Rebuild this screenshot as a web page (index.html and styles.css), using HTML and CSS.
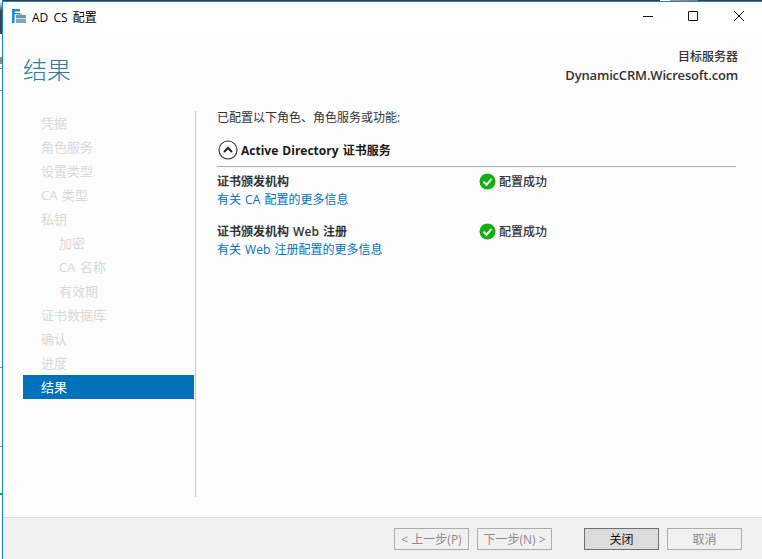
FILE: index.html
```html
<!DOCTYPE html>
<html lang="zh-CN">
<head>
<meta charset="utf-8">
<title>AD CS 配置</title>
<link rel="stylesheet" href="styles.css">
</head>
<body>
<div class="desk-strip"></div>
<div class="window">
  <div class="top-strip"></div>
  <header class="titlebar">
    <svg class="app-icon" width="14" height="14" viewBox="0 0 14 14">
      <path d="M0 0h8v2.4H2.6V4H8v1.2H2.6V14H0z" fill="#1e88dc"/>
      <path d="M6.5 6V4.6h3.6V6h-1V5.5H7.5V6z" fill="#7f9db2"/>
      <path d="M4 6h10v3H4z" fill="#6f95b0"/>
      <path d="M4 9.6h10V14H4z" fill="#82a5bd"/>
    </svg>
    <span class="title-text">AD CS 配置</span>
    <div class="controls">
      <svg class="ctl" width="46" height="32" viewBox="0 0 46 32"><path d="M19 16.5h10" stroke="#111" fill="none"/></svg>
      <svg class="ctl" width="46" height="32" viewBox="0 0 46 32"><path d="M18.5 11.5h9v9h-9z" stroke="#111" fill="none"/></svg>
      <svg class="ctl" width="46" height="32" viewBox="0 0 46 32"><path d="M18 11l10 10M28 11L18 21" stroke="#111" fill="none"/></svg>
    </div>
  </header>
  <main class="wizard">
    <div class="head">
      <h1 class="page-title">结果</h1>
      <div class="server">
        <div class="server-label">目标服务器</div>
        <div class="server-name">DynamicCRM.Wicresoft.com</div>
      </div>
    </div>
    <div class="body">
      <nav class="steps">
        <div class="step">凭据</div>
        <div class="step">角色服务</div>
        <div class="step">设置类型</div>
        <div class="step">CA 类型</div>
        <div class="step">私钥</div>
        <div class="step sub">加密</div>
        <div class="step sub">CA 名称</div>
        <div class="step sub">有效期</div>
        <div class="step">证书数据库</div>
        <div class="step">确认</div>
        <div class="step">进度</div>
        <div class="step current">结果</div>
      </nav>
      <section class="content">
        <p class="intro">已配置以下角色、角色服务或功能:</p>
        <div class="group-head">
          <svg width="20" height="20" viewBox="0 0 20 20"><circle cx="10" cy="10" r="9" fill="#fff" stroke="#333" stroke-width="1.1"/><path d="M6 12l4-4 4 4" fill="none" stroke="#222" stroke-width="2"/></svg>
          <span class="group-name">Active Directory 证书服务</span>
        </div>
        <div class="result">
          <div class="result-main">
            <div class="result-name">证书颁发机构</div>
            <a class="result-link">有关 CA 配置的更多信息</a>
          </div>
          <div class="status">
            <svg width="17" height="17" viewBox="0 0 17 17"><circle cx="8.5" cy="8.5" r="8" fill="#10b010"/><path d="M4.5 8.8l3 3 5-6" fill="none" stroke="#fff" stroke-width="2"/></svg>
            <span>配置成功</span>
          </div>
        </div>
        <div class="result">
          <div class="result-main">
            <div class="result-name">证书颁发机构 Web 注册</div>
            <a class="result-link">有关 Web 注册配置的更多信息</a>
          </div>
          <div class="status">
            <svg width="17" height="17" viewBox="0 0 17 17"><circle cx="8.5" cy="8.5" r="8" fill="#10b010"/><path d="M4.5 8.8l3 3 5-6" fill="none" stroke="#fff" stroke-width="2"/></svg>
            <span>配置成功</span>
          </div>
        </div>
      </section>
    </div>
  </main>
  <footer class="footer">
    <button class="btn disabled">&lt; 上一步(P)</button>
    <button class="btn disabled next">下一步(N) &gt;</button>
    <button class="btn primary">关闭</button>
    <button class="btn disabled">取消</button>
  </footer>
</div>
</body>
</html>
```
FILE: styles.css
```css
* { box-sizing: border-box; }
html, body { height: 100%; }
body {
  margin: 0;
  height: 559px;
  width: 762px;
  overflow: hidden;
  display: flex;
  background: #fff;
  font-family: "Open Sans", "Noto Sans CJK SC", sans-serif;
  font-size: 12px;
  word-spacing: 1px;
  color: #333;
}
.desk-strip {
  width: 2px;
  flex: none;
  background: linear-gradient(#fff 0, #fff 1px, #444 11px, #444 34px, #fff 34px, #fff 57px, #a08a70 57px, #a08a70 64px, #fff 64px, #fff 68px, #888 68px, #888 69px, #fff 69px, #fff 90px, #888 90px, #888 91px, #fff 91px, #fff 367px, #888 367px, #888 368px, #fff 368px, #fff 446px, #888 446px, #888 447px, #fff 447px, #fff 493px, #10b010 493px, #10b010 495px, #fff 495px);
}
.window {
  flex: 1;
  display: flex;
  flex-direction: column;
  border-left: 1px solid #0f7fdc;
  min-width: 0;
}
.top-strip {
  height: 1px;
  flex: none;
  background: linear-gradient(90deg, #3c3c3c 0, #3c3c3c 657px, #fff 657px, #fff 667px, #b89a60 667px, #8a6a80 695px, #3c3c3c 695px);
}
.titlebar {
  height: 31px;
  border-top: 1px solid #2f7fc4;
  background: #fff;
  display: flex;
  align-items: center;
  padding-left: 9px;
  flex: none;
}
.app-icon { margin-right: 6px; margin-top: -2px; }
.title-text { color: #000; font-size: 12px; margin-top: -1px; word-spacing: 2px; }
.controls { margin-left: auto; display: flex; margin-top: -2px; }
.ctl { display: block; }
.wizard {
  flex: 1;
  background: #fcfcfc;
  display: flex;
  flex-direction: column;
  min-height: 0;
}
.head {
  height: 79px;
  display: flex;
  justify-content: space-between;
  padding: 0 24px 0 20px;
  flex: none;
}
.page-title {
  margin: 20px 0 0;
  font-size: 24px;
  font-weight: 300;
  line-height: 36px;
  color: #2a7f9f;
}
.server { text-align: right; padding-top: 15px; color: #333; }
.server-label { font-size: 12px; line-height: 19px; font-weight: 500; }
.server-name { font-size: 13px; line-height: 18px; font-weight: 600; letter-spacing: -0.17px; }
.body {
  flex: 1;
  display: flex;
  min-height: 0;
  padding-bottom: 20px;
}
.steps {
  width: 171px;
  margin-left: 20px;
  flex: none;
}
.step {
  height: 24px;
  line-height: 24px;
  padding-left: 18px;
  font-size: 13px;
  color: #d8d8d8;
}
.step.sub { padding-left: 36px; }
.step.current { background: #0072bc; color: #fff; }
.content {
  flex: 1;
  margin-left: 1px;
  border-left: 1px solid #c8c8c8;
  padding: 0 26px 0 21px;
}
.intro { margin: 0; line-height: 14px; color: #333; }
.group-head {
  height: 32px;
  margin-top: 10px;
  border-bottom: 1px solid #a8a8a8;
  display: flex;
  align-items: center;
  gap: 3px;
  padding: 0 0 1px 1px;
}
.group-name { font-weight: 700; font-size: 12px; color: #1a1a1a; }
.result { display: flex; height: 50px; padding-top: 6px; }
.result-main { width: 262px; flex: none; }
.result-name { line-height: 18px; font-weight: 600; color: #333; }
.result-link { display: block; line-height: 18px; color: #0072bc; }
.status { display: flex; align-items: flex-start; gap: 3px; line-height: 17px; color: #333; font-weight: 500; }
.footer {
  height: 42px;
  flex: none;
  border-top: 1px solid #dcdcdc;
  background: #f0f0f0;
  display: flex;
  align-items: flex-start;
  padding: 10px 0 0 391px;
}
.btn {
  width: 75px;
  height: 22px;
  padding: 0;
  font: inherit;
  background: #f0f0f0;
  border: 1px solid #adadad;
  color: #8c8c8c;
  margin-right: 8px;
}
.btn.next { margin-right: 32px; }
.btn.primary { background: #dcdcdc; border-color: #707070; color: #111; }
```
